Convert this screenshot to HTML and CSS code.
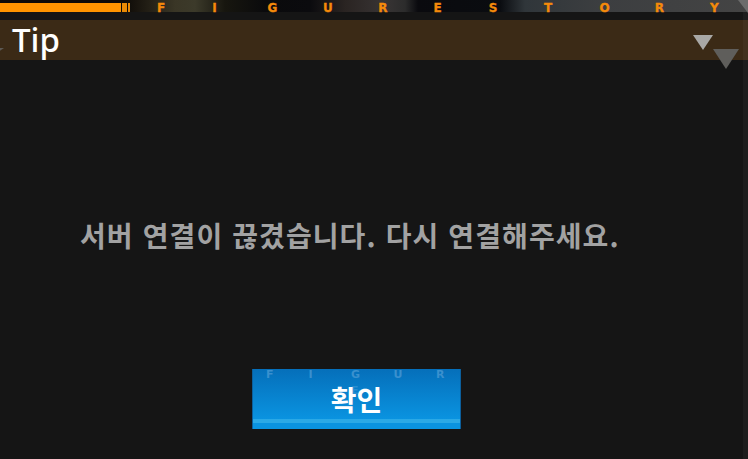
FILE: index.html
```html
<!DOCTYPE html>
<html lang="ko">
<head>
<meta charset="utf-8">
<title>Tip</title>
<link rel="stylesheet" href="styles.css">
</head>
<body>
<div class="page">
  <div class="top-strip">
    <div class="progress">
      <div class="progress-fill"></div>
      <div class="tick tick-wide"></div>
      <div class="tick tick-narrow"></div>
    </div>
    <div class="brand">
      <span>F</span><span>I</span><span>G</span><span>U</span><span>R</span><span>E</span><span>S</span><span>T</span><span>O</span><span>R</span><span>Y</span>
    </div>
  </div>
  <header class="title-bar"><h1 class="title">Tip</h1></header>
  <main class="message-area"><p class="message">서버 연결이 끊겼습니다. 다시 연결해주세요.</p></main>
  <div class="actions">
    <button class="confirm" type="button">
      <span class="confirm-brand"><span>F</span><span>I</span><span>G</span><span>U</span><span>R</span></span>
      <span class="confirm-brand-e">E</span>
      <span class="confirm-label">확인</span>
      <span class="confirm-stripe"></span>
    </button>
  </div>
</div>
<div class="edge"></div>
<div class="tri tri-corner"></div>
<div class="tri tri-left"></div>
<div class="tri tri-light"></div>
<div class="tri tri-dark"></div>
</body>
</html>
```
FILE: styles.css
```css
* { box-sizing: border-box; }
html, body { margin: 0; padding: 0; }
body {
  width: 748px;
  height: 459px;
  overflow: hidden;
  background: #151515;
  position: relative;
  font-family: "Noto Sans", "Noto Sans CJK KR", sans-serif;
}
.page { display: flex; flex-direction: column; height: 459px; }

.top-strip {
  height: 12px;
  display: flex;
  background: linear-gradient(90deg, #0d0b08 0, #0d0b08 125px, #17130d 135px, #3a3626 175px, #3c3a2a 195px, #17160f 225px, #0a0a0c 265px, #0b0b0e 310px, #2a2422 345px, #383434 385px, #2c2c2c 405px, #0a0a0e 418px, #0a0c10 500px, #30363a 525px, #3c3e40 600px, #444 748px);
}
.progress { display: flex; gap: 1px; width: 130px; padding-top: 3px; flex: none; }
.progress-fill { width: 121px; background: #ff9400; }
.tick { background: #e88a05; }
.tick-wide { width: 5px; }
.tick-narrow { width: 2px; }
.brand {
  flex: 1;
  display: flex;
  padding: 3px 0 0 27px;
  color: #f58a0a;
  font: 700 12px/10px "DejaVu Sans", sans-serif;
  -webkit-text-stroke: 0.3px #f58a0a;
}
.brand span { width: 55.3px; flex: none; }

.title-bar {
  margin-top: 8px;
  height: 40px;
  background: #3b2a16;
  flex: none;
}
.title {
  margin: 0;
  padding-left: 12px;
  color: #fff;
  font: 500 33px/40px "Noto Sans", sans-serif;
}

.message-area {
  flex: none;
  height: 309px;
  display: flex;
  align-items: center;
  padding: 40px 0 0 80px;
}
.message {
  margin: 0;
  color: #a2a2a2;
  font: 700 28px/36px "Noto Sans CJK KR", sans-serif;
  letter-spacing: 1.1px;
  white-space: nowrap;
}

.actions { display: flex; padding-left: 252px; }
.confirm {
  position: relative;
  width: 209px;
  height: 60px;
  padding: 0;
  border: 0;
  border-left: 1px solid #0c5f9c;
  border-right: 1px solid #0c5f9c;
  overflow: hidden;
  background: linear-gradient(180deg, #056fba 0, #0a93e0 50px, #0a93e0 60px);
  color: #fff;
  font-family: "Noto Sans CJK KR", sans-serif;
}
.confirm-brand {
  position: absolute;
  top: 0;
  left: 13px;
  display: flex;
  color: #3a90ce;
  font: 700 11px/12px "DejaVu Sans", sans-serif;
}
.confirm-brand span { width: 42.5px; text-align: left; }
.confirm-brand-e {
  position: absolute;
  top: 16px;
  left: 98px;
  color: #2a8fd2;
  font: 700 11px/12px "DejaVu Sans", sans-serif;
}
.confirm-label {
  position: absolute;
  top: 12px;
  left: 0;
  right: 0;
  text-align: center;
  font-size: 28px;
  font-weight: 700;
  line-height: 36px;
}
.confirm-stripe {
  position: absolute;
  top: 50px;
  left: 0;
  right: 0;
  height: 4px;
  background: #2ba9e6;
}

.edge {
  position: absolute;
  top: 12px;
  right: 0;
  width: 5px;
  height: 447px;
  background: rgba(255, 255, 255, 0.035);
}
.tri {
  position: absolute;
  width: 0;
  height: 0;
  border-style: solid;
  border-color: transparent;
  border-bottom-width: 0;
}
.tri-corner {
  top: 0;
  left: 738px;
  border-width: 13px 10px 0;
  border-top-color: #6b6b6b;
}
.tri-left {
  top: 48px;
  left: -16px;
  border-width: 7px 10px 0;
  border-top-color: #5d5a55;
}
.tri-light {
  top: 35px;
  left: 693px;
  border-width: 15px 10px 0;
  border-top-color: #a9a8a6;
}
.tri-dark {
  top: 49px;
  left: 713px;
  border-width: 20px 13px 0;
  border-top-color: #5f5e5b;
}
```
